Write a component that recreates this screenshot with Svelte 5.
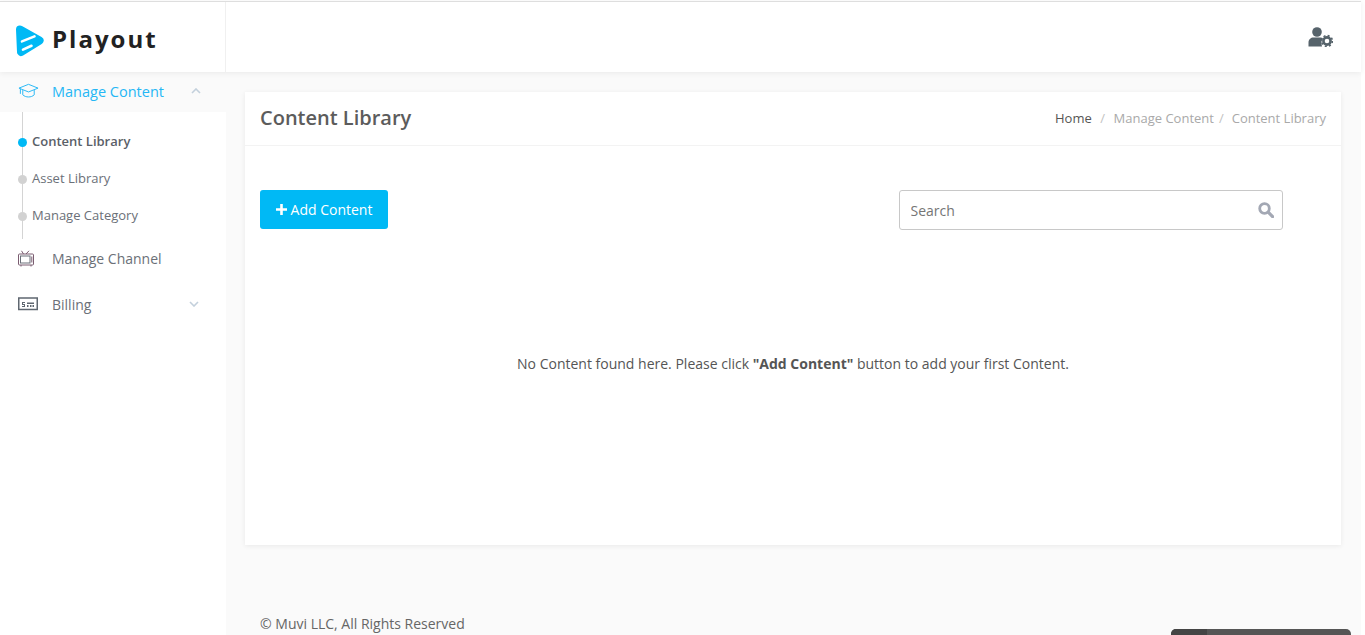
<!-- Playout admin: content library, empty state -->

<script>
  const subItems = [
    { label: 'Content Library', active: true },
    { label: 'Asset Library', active: false },
    { label: 'Manage Category', active: false }
  ];
</script>

<div class="page">
  <div class="shell">
    <header class="topbar">
      <div class="brand">
        <svg class="logo" width="29" height="32" viewBox="0 0 29 32">
          <path fill="#00b9f5" stroke="#00b9f5" stroke-width="8" stroke-linejoin="round" d="M5 4.6L24.6 15.6L6 27Z"/>
          <g fill="none" stroke="#fff" stroke-width="2.6" stroke-linecap="round">
            <path d="M7 16.4L19.5 11.4"/>
            <path d="M8 24.6L16.5 20.8"/>
          </g>
        </svg>
        <span class="brand-name">Playout</span>
      </div>
      <div class="topbar-right">
        <svg class="user-gear" width="25" height="20" viewBox="0 0 25 20">
          <circle cx="9" cy="5" r="4.8" fill="#56636b"/>
          <path fill="#56636b" d="M0.5 19.4V15.6C0.5 12.6 2.8 10.6 5.6 10.6H12.4C13.4 10.6 14.2 10.8 15 11.2C13.4 12.8 13 15.8 14 19.4Z"/>
          <circle cx="19" cy="14" r="3.6" fill="none" stroke="#56636b" stroke-width="2.6"/>
          <circle cx="19" cy="14" r="5.4" fill="none" stroke="#56636b" stroke-width="1.6" stroke-dasharray="2 2.24"/>
        </svg>
      </div>
    </header>

    <div class="body">
      <nav class="sidebar">
        <div class="nav-row nav-row--open">
          <svg class="nav-icon" width="21" height="16" viewBox="0 0 22 16" fill="none" stroke="#25b7f5" stroke-width="1">
            <path d="M1 5L11 1L21 5L11 9Z"/>
            <path d="M5 7V12C8 15 14 15 17 12V7"/>
            <path d="M2.5 5.6V11"/>
          </svg>
          <span class="nav-label">Manage Content</span>
          <svg class="chevron chevron--up" width="10" height="6" viewBox="0 0 10 6" fill="none" stroke="#c3d0dc" stroke-width="1.6">
            <path d="M1 5L5 1L9 5"/>
          </svg>
        </div>

        <ul class="sub-list">
          {#each subItems as item}
            <li class="sub-item" class:sub-item--active={item.active}>{item.label}</li>
          {/each}
        </ul>

        <div class="nav-row nav-row--channel">
          <svg class="nav-icon" width="17" height="17" viewBox="0 0 17 17" fill="none" stroke="#7a5c70" stroke-width="1">
            <path d="M5.5 4L3.5 0.8M8 4L11 0.8"/>
            <rect x="0.5" y="4" width="15" height="11" rx="1"/>
            <rect x="2.5" y="6" width="9.5" height="7" stroke="#6a6f78"/>
            <path d="M13.8 6.5V12.5"/>
            <path d="M3 15V16.5M13 15V16.5"/>
          </svg>
          <span class="nav-label">Manage Channel</span>
        </div>

        <div class="nav-row nav-row--billing">
          <svg class="nav-icon" width="20" height="14" viewBox="0 0 20 14">
            <rect x="0.75" y="1" width="18.5" height="11.5" fill="none" stroke="#5f6770" stroke-width="1.5"/>
            <path fill="#5f6770" d="M4 5h3v1H5v1h2v3H4V9h2V8H4zM9 5.5h7v1.5h-7zM9 8h1.5v2H9zM12 8h1.5v2H12zM14.5 8H16v2h-1.5z"/>
          </svg>
          <span class="nav-label">Billing</span>
          <svg class="chevron" width="10" height="6" viewBox="0 0 10 6" fill="none" stroke="#c3d0dc" stroke-width="1.6">
            <path d="M1 1L5 5L9 1"/>
          </svg>
        </div>
      </nav>

      <main class="content">
        <section class="card">
          <div class="card-head">
            <h1>Content Library</h1>
            <ol class="crumbs">
              <li class="crumb-home">Home</li>
              <li class="crumb-sep crumb-sep--wide">/</li>
              <li>Manage Content</li>
              <li class="crumb-sep">/</li>
              <li>Content Library</li>
            </ol>
          </div>

          <div class="card-body">
            <div class="toolbar">
              <button class="add-btn" type="button">
                <svg width="11" height="11" viewBox="0 0 11 11"><path fill="#fff" d="M4.2 0H6.8V4.2H11V6.8H6.8V11H4.2V6.8H0V4.2H4.2Z"/></svg>
                Add Content
              </button>
              <div class="search">
                <input type="text" placeholder="Search" />
                <svg width="16" height="16" viewBox="0 0 16 16" fill="none" stroke="#a3a8b4">
                  <circle cx="6.5" cy="6.5" r="4.8" stroke-width="2.8"/>
                  <path d="M10.2 10.2L14.6 14.6" stroke-width="3.2" stroke-linecap="round"/>
                </svg>
              </div>
            </div>
            <p class="empty">No Content found here. Please click <strong>"Add Content"</strong> button to add your first Content.</p>
          </div>
        </section>

        <footer class="footer">© Muvi LLC, All Rights Reserved</footer>
      </main>
    </div>
  </div>

  <div class="dock"><span class="dock-tab"></span></div>
</div>

<style>
  :global(body) {
    margin: 0;
    background: #fff;
    font-family: "Open Sans", sans-serif;
    overflow: hidden;
  }

  .page {
    height: 635px;
    overflow: hidden;
    position: relative;
  }

  .shell {
    width: 1361px;
    height: 635px;
    display: flex;
    flex-direction: column;
    padding-top: 1px;
    box-sizing: border-box;
  }

  .topbar {
    height: 71px;
    box-sizing: border-box;
    border-top: 1px solid #dedede;
    flex-shrink: 0;
    display: flex;
    background: #fff;
    box-shadow: 0 1px 6px rgba(0, 0, 0, 0.07);
    position: relative;
    z-index: 2;
  }

  .brand {
    width: 226px;
    box-sizing: border-box;
    padding: 8px 0 0 15px;
    display: flex;
    align-items: center;
    gap: 8px;
    border-right: 1px solid #f0f0f0;
  }

  .brand-name {
    font-size: 24px;
    font-weight: 700;
    letter-spacing: 2px;
    color: #222;
    line-height: 1;
    margin-top: -5px;
  }

  .logo {
    flex-shrink: 0;
  }

  .topbar-right {
    flex: 1;
    display: flex;
    justify-content: flex-end;
    align-items: flex-start;
    padding: 25px 28px 0 0;
  }

  .body {
    flex: 1;
    display: flex;
    min-height: 0;
  }

  .sidebar {
    width: 226px;
    flex-shrink: 0;
    background: #fff;
  }

  .nav-row {
    height: 40px;
    box-sizing: border-box;
    padding: 0 0 2px 18px;
    display: flex;
    align-items: center;
    color: #6b7078;
    font-size: 14px;
  }

  .nav-row--open {
    background: #fafafa;
    color: #25b7f5;
    font-size: 14.5px;
    font-weight: 500;
  }

  .nav-row--billing {
    margin-top: 6px;
  }

  .nav-icon {
    flex-shrink: 0;
  }

  .nav-row--open .nav-icon {
    margin-right: 13px;
  }

  .nav-row--channel .nav-icon {
    margin-right: 17px;
  }

  .nav-row--billing .nav-icon {
    margin-right: 14px;
  }

  .nav-label {
    flex: 1;
  }

  .chevron {
    margin-right: 27px;
  }

  .chevron--up {
    margin-right: 25px;
  }

  .sub-list {
    list-style: none;
    margin: 0 0 0 22px;
    padding: 11px 0 0;
    height: 127px;
    box-sizing: border-box;
    border-left: 1px solid #d4d4d4;
  }

  .sub-item {
    height: 37px;
    line-height: 37px;
    font-size: 13px;
    color: #6b7078;
    padding-left: 9px;
    position: relative;
  }

  .sub-item::before {
    content: "";
    position: absolute;
    left: -5px;
    top: 15px;
    width: 9px;
    height: 9px;
    border-radius: 50%;
    background: #d2d2d2;
  }

  .sub-item--active {
    font-weight: 600;
    color: #5a6068;
  }

  .sub-item--active::before {
    background: #00b9f5;
  }

  .content {
    flex: 1;
    background: #fafafa;
    padding: 20px 20px 0 19px;
    min-width: 0;
    display: flex;
    flex-direction: column;
  }

  .card {
    height: 453px;
    flex-shrink: 0;
    background: #fff;
    box-shadow: 0 1px 5px rgba(0, 0, 0, 0.07);
  }

  .card-head {
    height: 54px;
    box-sizing: border-box;
    border-bottom: 1px solid #f3f3f3;
    padding: 0 15px 2px;
    display: flex;
    align-items: center;
    justify-content: space-between;
  }

  h1 {
    margin: 0;
    font-size: 20px;
    font-weight: 600;
    color: #5c5c5c;
  }

  .crumbs {
    list-style: none;
    margin: 0;
    padding: 0;
    display: flex;
    font-size: 13px;
    color: #a9a9a9;
  }

  .crumb-home {
    color: #555;
  }

  .crumb-sep {
    margin: 0 8px 0 5px;
    color: #c2c2c2;
  }

  .crumb-sep--wide {
    margin: 0 8.5px;
  }

  .card-body {
    padding: 44px 15px 0;
  }

  .toolbar {
    display: flex;
    justify-content: space-between;
    align-items: flex-start;
    padding-right: 43px;
  }

  .add-btn {
    height: 39px;
    width: 128px;
    border: 0;
    border-radius: 3px;
    background: #00b9f5;
    color: #fff;
    font-family: inherit;
    font-size: 14px;
    display: flex;
    align-items: center;
    justify-content: center;
    gap: 4px;
    padding: 0;
  }

  .search {
    width: 384px;
    height: 40px;
    box-sizing: border-box;
    border: 1px solid #c8c8c8;
    border-radius: 3px;
    display: flex;
    align-items: center;
    padding: 0 8px 0 10.5px;
  }

  .search input {
    flex: 1;
    min-width: 0;
    border: 0;
    outline: 0;
    padding: 0;
    font-family: inherit;
    font-size: 14px;
    background: none;
  }

  .search input::placeholder {
    color: #757575;
  }

  .empty {
    margin: 124px 0 0;
    text-align: center;
    font-size: 14px;
    color: #555;
  }

  .footer {
    margin-top: 69px;
    padding-left: 15px;
    font-size: 14px;
    color: #666;
  }

  .dock {
    position: absolute;
    left: 1171px;
    top: 629px;
    width: 180px;
    height: 10px;
    border-radius: 5px 5px 0 0;
    background: #555;
    overflow: hidden;
  }

  .dock-tab {
    display: block;
    width: 36px;
    height: 10px;
    background: #444;
  }
</style>
